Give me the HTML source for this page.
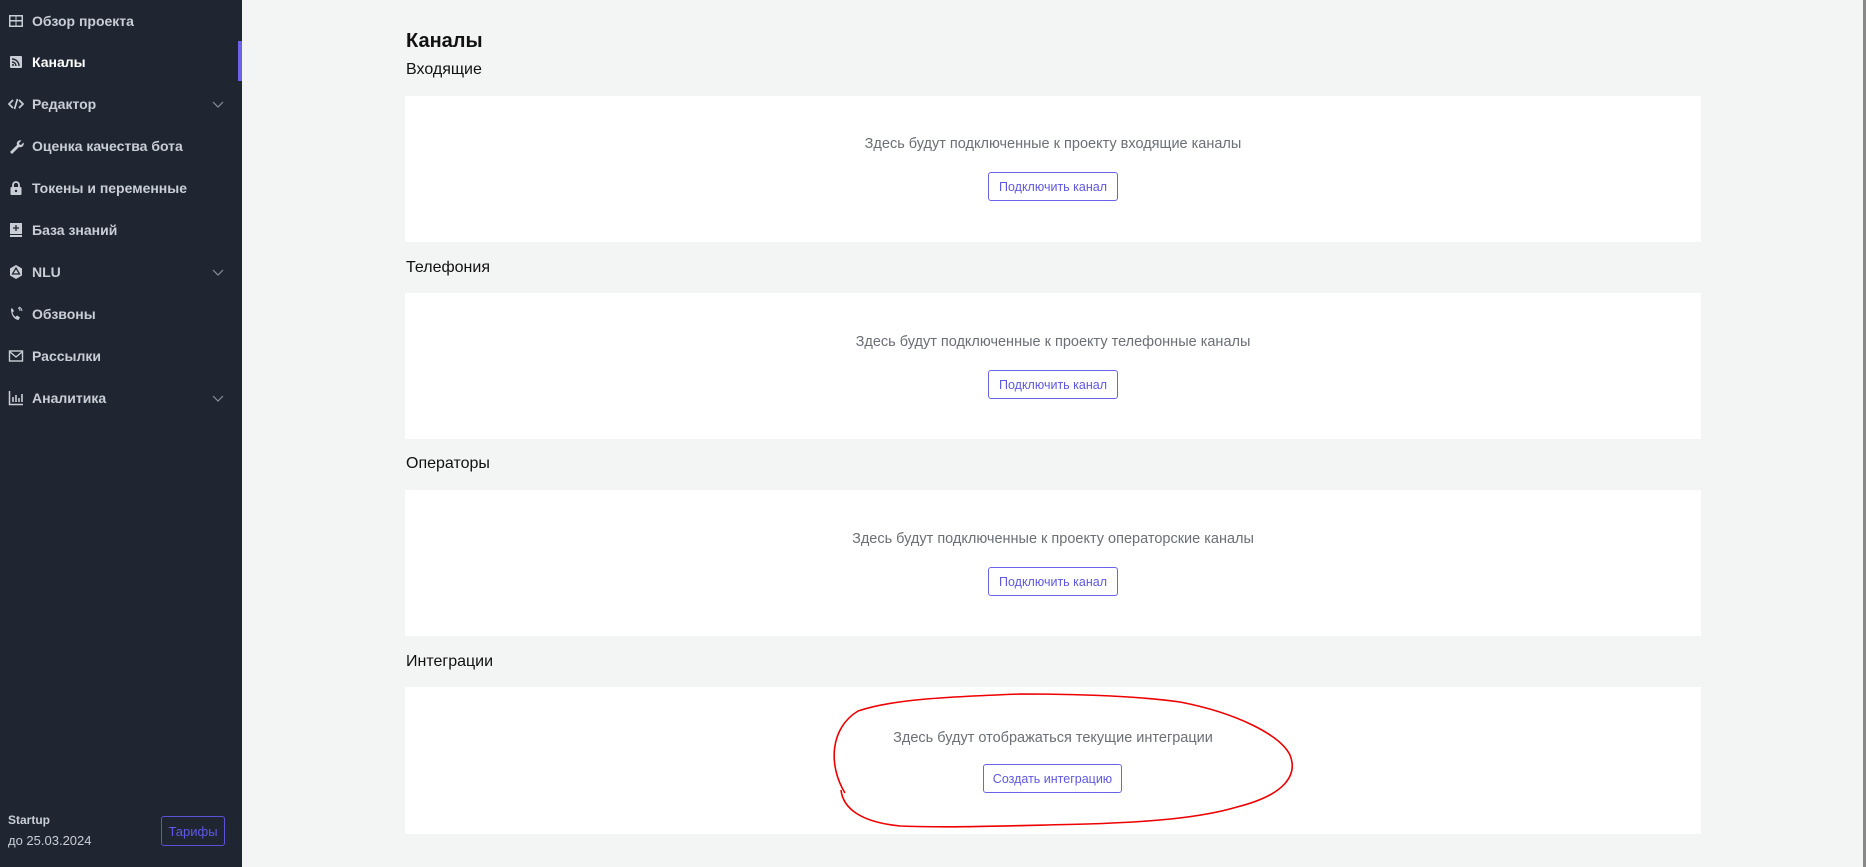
<!DOCTYPE html>
<html><head><meta charset="utf-8"><style>
*{box-sizing:border-box;margin:0;padding:0}
body{width:1866px;height:867px;overflow:hidden;background:#f3f4f4;font-family:"Liberation Sans",sans-serif;position:relative}
.sb{position:absolute;left:0;top:0;width:242px;height:867px;background:#1f2531}
.act{position:absolute;left:238px;top:41px;width:4px;height:40px;background:#6c63e8}
.it{position:absolute;left:0;width:242px;height:30px;display:flex;align-items:center;color:#c9ced6;font-weight:bold;font-size:14px}
.it svg{position:absolute;left:8px;width:16px;height:16px}
.it span{position:absolute;left:32px}
.it .ch{position:absolute;left:212px;width:12px;height:12px}
.main h1{position:absolute;left:406px;top:30px;font-size:20px;font-weight:bold;color:#111}
.h2{position:absolute;left:406px;font-size:16px;color:#111}
.card{position:absolute;left:405px;width:1296px;background:#fff}
.card p{position:absolute;left:0;right:0;text-align:center;color:#6b6f76;font-size:14.5px}
.btn{position:absolute;border:1px solid #6a63e8;border-radius:3px;color:#5f58e0;font-size:12.5px;display:flex;align-items:center;justify-content:center;background:#fff}
</style></head><body>
<div class="sb">
<div class="act"></div>
<div class="it" style="top:6px;color:#c9ced6"><svg viewBox="0 0 16 16"><path fill="#c9ced6" d="M1 2h14v12H1z M2.5 3.5v3.5h5v-3.5z M8.5 3.5v3.5h5v-3.5z M2.5 8.5v4h5v-4z M8.5 8.5v4h5v-4z" fill-rule="evenodd"/></svg><span>Обзор проекта</span></div>
<div class="it" style="top:47px;color:#fff"><svg viewBox="0 0 16 16"><rect x="2" y="2" width="12" height="12" rx="1" fill="#c9ced6"/><path d="M4 5a7 7 0 0 1 7 7M4 8a4 4 0 0 1 4 4" stroke="#1f2531" stroke-width="1.4" fill="none"/><circle cx="5" cy="11" r="1" fill="#1f2531"/></svg><span>Каналы</span></div>
<div class="it" style="top:89px"><svg viewBox="0 0 16 16"><path d="M5 4L1 8l4 4M11 4l4 4-4 4M9.5 3l-3 10" stroke="#c9ced6" stroke-width="1.7" fill="none"/></svg><span>Редактор</span><svg class="ch" viewBox="0 0 12 12"><path d="M1 4l5 5 5-5" stroke="#8b919c" stroke-width="1.2" fill="none"/></svg></div>
<div class="it" style="top:131px"><svg viewBox="0 0 16 16"><path d="M2 14l7-7a3.5 3.5 0 0 1 4.5-4.5L11 5l.5 1.5L13 7l2.5-2.5A3.5 3.5 0 0 1 11 9l-7 7z" fill="#c9ced6"/></svg><span>Оценка качества бота</span></div>
<div class="it" style="top:173px"><svg viewBox="0 0 16 16"><rect x="2.5" y="7" width="11" height="8" rx="1" fill="#c9ced6"/><path d="M5 7V5a3 3 0 0 1 6 0v2" stroke="#c9ced6" stroke-width="1.8" fill="none"/><circle cx="8" cy="11" r="1.2" fill="#1f2531"/></svg><span>Токены и переменные</span></div>
<div class="it" style="top:215px"><svg viewBox="0 0 16 16"><rect x="2" y="1" width="12" height="11" fill="#c9ced6"/><rect x="2" y="13" width="12" height="2" fill="#c9ced6"/><path d="M8 3v6M5 6h6" stroke="#1f2531" stroke-width="1.3"/></svg><span>База знаний</span></div>
<div class="it" style="top:257px"><svg viewBox="0 0 16 16"><path d="M8 1l6 3.5v7L8 15l-6-3.5v-7z" fill="#c9ced6"/><path d="M8 4l3.5 6h-7z" stroke="#1f2531" stroke-width="1.3" fill="none"/></svg><span>NLU</span><svg class="ch" viewBox="0 0 12 12"><path d="M1 4l5 5 5-5" stroke="#8b919c" stroke-width="1.2" fill="none"/></svg></div>
<div class="it" style="top:299px"><svg viewBox="0 0 16 16"><path d="M4 2l2 3-1.5 1.5c.5 2 1.5 3.5 3 4.5L9 9.5l3 2-1.5 2.5C6 13.5 3 9 3 3z" fill="#c9ced6"/><path d="M10 2a3 3 0 0 1 2 3M11 1a5 5 0 0 1 3 4" stroke="#c9ced6" stroke-width="1" fill="none"/></svg><span>Обзвоны</span></div>
<div class="it" style="top:341px"><svg viewBox="0 0 16 16"><rect x="1.5" y="3" width="13" height="10" stroke="#c9ced6" stroke-width="1.4" fill="none"/><path d="M1.5 3.5L8 9l6.5-5.5" stroke="#c9ced6" stroke-width="1.4" fill="none"/></svg><span>Рассылки</span></div>
<div class="it" style="top:383px"><svg viewBox="0 0 16 16"><path d="M1.5 1v13.5H15" stroke="#c9ced6" stroke-width="1.5" fill="none"/><path d="M5 12V7M8 12V5M11 12V8M14 12V4" stroke="#c9ced6" stroke-width="1.6"/></svg><span>Аналитика</span><svg class="ch" viewBox="0 0 12 12"><path d="M1 4l5 5 5-5" stroke="#8b919c" stroke-width="1.2" fill="none"/></svg></div>
<div style="position:absolute;left:8px;top:813px;color:#c9ced6;font-size:12px;font-weight:bold">Startup</div>
<div style="position:absolute;left:8px;top:833px;color:#c9ced6;font-size:13px">до 25.03.2024</div>
<div style="position:absolute;left:161px;top:816px;width:64px;height:30px;border:1px solid #5a53d8;border-radius:3px;color:#5f58e8;font-size:13px;display:flex;align-items:center;justify-content:center">Тарифы</div>
</div>
<div style="position:absolute;left:1863px;top:0;width:3px;height:867px;background:#888"></div>
<div class="main">
<h1>Каналы</h1>
<div class="h2" style="top:61px">Входящие</div>
<div class="card" style="top:96px;height:146px"><p style="top:40px">Здесь будут подключенные к проекту входящие каналы</p><div class="btn" style="left:583px;top:76px;width:130px;height:29px">Подключить канал</div></div>
<div class="h2" style="top:259px">Телефония</div>
<div class="card" style="top:293px;height:146px"><p style="top:41px">Здесь будут подключенные к проекту телефонные каналы</p><div class="btn" style="left:583px;top:77px;width:130px;height:29px">Подключить канал</div></div>
<div class="h2" style="top:455px">Операторы</div>
<div class="card" style="top:490px;height:146px"><p style="top:41px">Здесь будут подключенные к проекту операторские каналы</p><div class="btn" style="left:583px;top:77px;width:130px;height:29px">Подключить канал</div></div>
<div class="h2" style="top:653px">Интеграции</div>
<div class="card" style="top:687px;height:147px"><p style="top:43px">Здесь будут отображаться текущие интеграции</p><div class="btn" style="left:578px;top:77px;width:139px;height:29px">Создать интеграцию</div></div>
</div>
<svg style="position:absolute;left:0;top:0" width="1866" height="867"><path d="M845 793 C828 765 830 728 858 711 C890 700 940 697 1020 694 C1100 694 1153 698 1180 702 C1237 713 1280 735 1290 755 C1298 775 1285 795 1237 807 C1200 818 1150 822 1087 824 C1000 826 953 828 900 826 C860 822 843 808 841 790" stroke="#e00" stroke-width="1.6" fill="none"/></svg>
</body></html>
